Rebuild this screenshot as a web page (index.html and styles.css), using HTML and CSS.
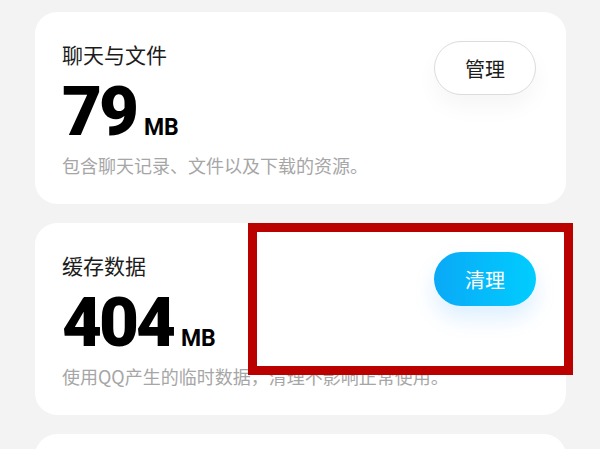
FILE: index.html
```html
<!DOCTYPE html>
<html lang="zh">
<head>
<meta charset="utf-8">
<link rel="stylesheet" href="styles.css">
</head>
<body>
<div class="page">
  <div class="card">
    <div class="info">
      <div class="title">聊天与文件</div>
      <div class="size"><span class="num">79</span><span class="unit">MB</span></div>
      <div class="desc">包含聊天记录、文件以及下载的资源。</div>
    </div>
    <button class="btn btn-outline">管理</button>
  </div>
  <div class="card">
    <div class="info">
      <div class="title">缓存数据</div>
      <div class="size"><span class="num">404</span><span class="unit">MB</span></div>
      <div class="desc">使用QQ产生的临时数据，清理不影响正常使用。</div>
    </div>
    <button class="btn btn-blue">清理</button>
  </div>
  <div class="card"></div>
</div>
<div class="mark"></div>
</body>
</html>
```
FILE: styles.css
```css
html, body {
  margin: 0;
  padding: 0;
  background: #f3f3f3;
  overflow: hidden;
}
body {
  width: 600px;
  height: 449px;
  position: relative;
  font-family: "Noto Sans CJK SC", "Noto Sans", sans-serif;
}
.page {
  padding: 12px 0 0 35px;
  display: flex;
  flex-direction: column;
  gap: 19px;
}
.card {
  width: 531px;
  height: 192px;
  box-sizing: border-box;
  background: #fff;
  border-radius: 22px;
  padding: 30px 30px 0 27px;
  display: flex;
  justify-content: space-between;
  align-items: flex-start;
}
.info {
  display: flex;
  flex-direction: column;
  flex: 1;
  min-width: 0;
}
.title {
  font-size: 21px;
  line-height: 24px;
  color: #1c1c1c;
}
.size {
  margin-top: 11px;
  display: flex;
  align-items: baseline;
  height: 70px;
  line-height: 70px;
}
.num {
  font-family: "Roboto", "Liberation Sans", sans-serif;
  font-weight: 900;
  font-size: 69px;
  letter-spacing: -3px;
  color: #000;
}
.unit {
  font-family: "Roboto", "Liberation Sans", sans-serif;
  font-weight: 700;
  font-size: 23px;
  margin-left: 8px;
  color: #000;
}
.desc {
  margin-top: 7px;
  font-size: 18px;
  line-height: 22px;
  color: #a6a6a6;
  white-space: nowrap;
}
.btn {
  flex: none;
  margin-top: -1px;
  width: 102px;
  height: 54px;
  border-radius: 27px;
  font-family: "Noto Sans CJK SC", sans-serif;
  font-size: 20px;
  padding: 0;
  cursor: pointer;
}
.btn-outline {
  background: #fff;
  border: 1.5px solid #dcdcdc;
  color: #1c1c1c;
  box-shadow: 0 12px 22px rgba(0, 0, 0, 0.04);
}
.btn-blue {
  border: none;
  color: #fff;
  background: linear-gradient(90deg, #0aa9f6, #00cdff);
  box-shadow: 0 12px 22px rgba(0, 140, 255, 0.14);
}
.mark {
  position: absolute;
  left: 248px;
  top: 223px;
  width: 325px;
  height: 152px;
  box-sizing: border-box;
  border: 9px solid #bb0000;
}
```
